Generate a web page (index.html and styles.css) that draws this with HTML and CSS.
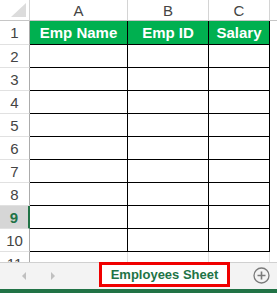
FILE: index.html
```html
<!DOCTYPE html>
<html lang="en">
<head>
    <meta charset="UTF-8">
    <meta name="viewport" content="width=device-width, initial-scale=1.0">
    <title>Employees Sheet</title>
    <link rel="stylesheet" href="styles.css">
</head>
<body>
    <div class="grid-wrap">
        <div class="grid">
            <!-- column headers -->
            <div class="corner"><span class="tri"></span></div>
            <div class="colhead">A</div>
            <div class="colhead">B</div>
            <div class="colhead">C</div>
            <div class="colhead extra"></div>

            <!-- row 1 -->
            <div class="rowhead first">1</div>
            <div class="cell head">Emp Name</div>
            <div class="cell head">Emp ID</div>
            <div class="cell head">Salary</div>
            <div class="blank first"></div>

            <div class="rowhead">2</div><div class="cell"></div><div class="cell"></div><div class="cell"></div><div class="blank"></div>
            <div class="rowhead">3</div><div class="cell"></div><div class="cell"></div><div class="cell"></div><div class="blank"></div>
            <div class="rowhead">4</div><div class="cell"></div><div class="cell"></div><div class="cell"></div><div class="blank"></div>
            <div class="rowhead">5</div><div class="cell"></div><div class="cell"></div><div class="cell"></div><div class="blank"></div>
            <div class="rowhead">6</div><div class="cell"></div><div class="cell"></div><div class="cell"></div><div class="blank"></div>
            <div class="rowhead">7</div><div class="cell"></div><div class="cell"></div><div class="cell"></div><div class="blank"></div>
            <div class="rowhead">8</div><div class="cell"></div><div class="cell"></div><div class="cell"></div><div class="blank"></div>
            <div class="rowhead selected">9</div><div class="cell"></div><div class="cell"></div><div class="cell"></div><div class="blank"></div>
            <div class="rowhead">10</div><div class="cell"></div><div class="cell"></div><div class="cell"></div><div class="blank"></div>
            <div class="rowhead">11</div><div class="cell empty"></div><div class="cell empty"></div><div class="cell empty"></div><div class="blank"></div>
        </div>
    </div>

    <div class="tabbar">
        <span class="arrow left"></span>
        <span class="arrow right"></span>
        <div class="tab">Employees Sheet</div>
        <span class="spacer"></span>
        <svg class="add" width="17" height="17" viewBox="0 0 17 17">
            <circle cx="8.5" cy="8.5" r="7.5" fill="none" stroke="#7a7a7a" stroke-width="1.3"/>
            <path d="M8.5 4.5v8M4.5 8.5h8" stroke="#7a7a7a" stroke-width="1.6"/>
        </svg>
    </div>
    <div class="statusbar"></div>
</body>
</html>
```

FILE: styles.css
```css
body {
    margin: 0;
    width: 277px;
    height: 293px;
    overflow: hidden;
    background: #fff;
    font-family: "Liberation Sans", Arial, sans-serif;
}
.grid-wrap {
    height: 262px;
    overflow: hidden;
}
.grid {
    display: grid;
    grid-template-columns: 30px 98px 81px 61px 7px;
    grid-template-rows: 21px 24px repeat(10, 23px);
}
.grid > div {
    box-sizing: border-box;
}
.corner {
    position: relative;
    border-right: 1px solid #d4d4d4;
    border-bottom: 1px solid #c6c6c6;
}
.tri {
    position: absolute;
    left: 11px;
    top: 3px;
    width: 0;
    height: 0;
    border-left: 15px solid transparent;
    border-bottom: 14px solid #dcdcdc;
}
.colhead {
    display: flex;
    align-items: center;
    justify-content: center;
    font-size: 15px;
    color: #444;
    border-right: 1px solid #d4d4d4;
    border-bottom: 1px solid #c6c6c6;
}
.colhead.extra {
    border-right: none;
}
.rowhead {
    display: flex;
    align-items: center;
    justify-content: center;
    font-size: 15px;
    color: #444;
    border-right: 1px solid #ababab;
    border-bottom: 1px solid #e1e1e1;
}
.rowhead.selected {
    background: #d6d6d6;
    color: #217346;
    font-weight: bold;
    border-right: 2px solid #217346;
}
.cell {
    border-right: 1px solid #000;
    border-bottom: 1px solid #000;
}
.cell.head {
    background: #00b050;
    color: #fff;
    font-weight: bold;
    font-size: 15px;
    display: flex;
    align-items: center;
    justify-content: center;
}
.cell.empty {
    border-right: 1px solid #e1e1e1;
    border-bottom: 1px solid #e1e1e1;
}
.tabbar {
    height: 27px;
    box-sizing: border-box;
    border-top: 1px solid #d0d0d0;
    background: #f3f3f3;
    display: flex;
    align-items: flex-start;
}
.arrow {
    width: 0;
    height: 0;
    margin-top: 9px;
    border-top: 4px solid transparent;
    border-bottom: 4px solid transparent;
}
.arrow.left {
    margin-left: 22px;
    border-right: 4px solid #c0c0c0;
}
.arrow.right {
    margin-left: 25px;
    border-left: 4px solid #c0c0c0;
}
.tab {
    margin-left: 44px;
    margin-top: -1px;
    width: 131px;
    height: 25px;
    box-sizing: border-box;
    border: 3px solid #f00000;
    background: #fff;
    color: #217346;
    font-weight: bold;
    font-size: 13px;
    display: flex;
    align-items: center;
    justify-content: center;
}
.spacer {
    flex: 1;
}
.add {
    margin-top: 4px;
    margin-right: 7px;
}
.statusbar {
    height: 4px;
    background: #217346;
}
```
